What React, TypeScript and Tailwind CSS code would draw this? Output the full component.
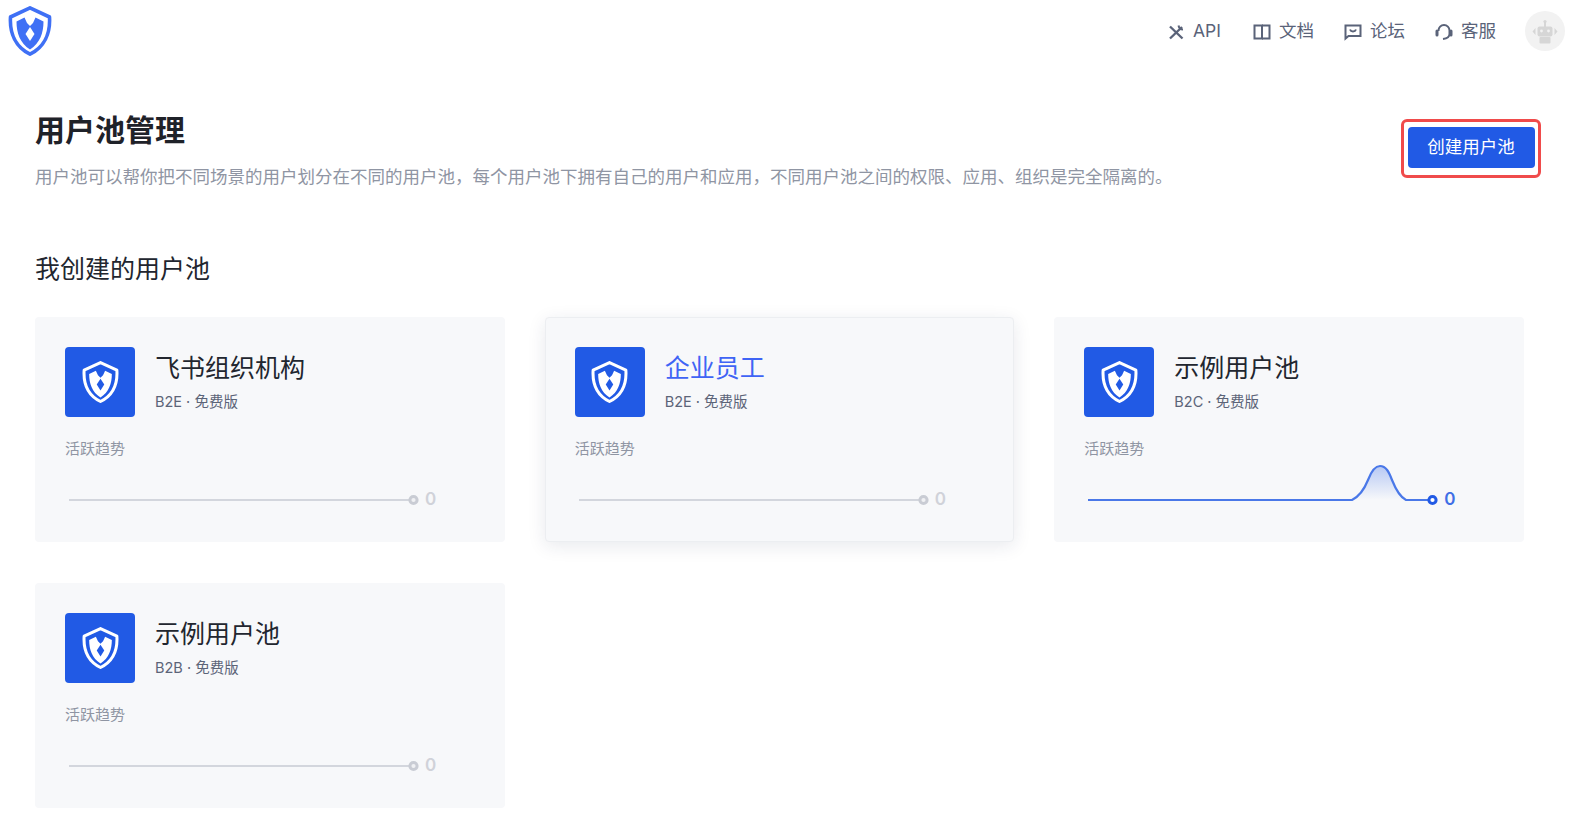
import React from "react";

const FONT = "font-['Inter','Noto_Sans_CJK_SC',sans-serif]";

function Shield({ className, color }: { className?: string; color: string }) {
  return (
    <svg viewBox="0 0 44 50" className={className}>
      <path d="M22 1.8 L41.5 11 C42.5 27 36.5 41 22 48.2 C7.5 41 1.5 27 2.5 11 Z" fill="none" stroke={color} strokeWidth="3.6" strokeLinejoin="round" />
      <path d="M16.5 11.5 L8.5 15.5 C8.5 27 12 37 22 43.5 C32 37 35.5 27 35.5 15.5 L27.5 11.5 L25 17 L22 20 L19 17 Z" fill={color} />
      <path d="M22 21 L26.5 28 L22 35 L17.5 28 Z" fill="var(--shield-bg)" />
    </svg>
  );
}

function Spark({ active }: { active?: boolean }) {
  const line = active ? "#4a78e8" : "#d3d6dd";
  const dot = active ? "#215ae5" : "#c9ccd4";
  return (
    <div className="mt-[8px] flex items-center h-[34px]">
      <svg width="354" height="34" viewBox="0 0 354 34" className="shrink-0 overflow-visible">
        {active && (
          <>
            <defs>
              <linearGradient id="fillArea" x1="0" y1="0" x2="0" y2="1">
                <stop offset="0" stopColor="#215ae5" stopOpacity="0.3" />
                <stop offset="1" stopColor="#215ae5" stopOpacity="0" />
              </linearGradient>
            </defs>
            <path d="M268 32 C276 28 280 22 284 12 C287 4 291 -2 296 -2 C302 -2 305 4 308 12 C312 22 316 29 322 32 Z" fill="url(#fillArea)" />
          </>
        )}
        {active ? (
          <path d="M4 32 L268 32 C276 28 280 22 284 12 C287 4 291 -2 296 -2 C302 -2 305 4 308 12 C312 22 316 29 322 32 L347 32" fill="none" stroke={line} strokeWidth="2.2" />
        ) : (
          <path d="M4 32 L347 32" fill="none" stroke={line} strokeWidth="2.2" />
        )}
        <circle cx="348.5" cy="32" r="3.6" fill={active ? "#ffffff" : "#f0f1f4"} stroke={dot} strokeWidth="3" />
      </svg>
      <span className={`ml-[6px] text-[17px] font-semibold leading-none relative top-[14px] ${active ? "text-[#3f6fe6]" : "text-[#d0d2d9]"}`}>0</span>
    </div>
  );
}

function Card({ title, type, hover, active, linked }: { title: string; type: string; hover?: boolean; active?: boolean; linked?: boolean }) {
  return (
    <div className={hover
      ? "h-[225px] rounded-[4px] bg-[#f7f8fa] border border-[#eceef1] p-[29px] shadow-[0_4px_18px_rgba(30,40,80,0.1)]"
      : "h-[225px] rounded-[4px] bg-[#f7f8fa] p-[30px]"}>
      <div className="flex items-start">
        <div className="w-[70px] h-[70px] rounded-[4px] bg-[#215ae5] flex items-center justify-center [--shield-bg:#215ae5]">
          <Shield className="w-[37px] h-[42px]" color="#ffffff" />
        </div>
        <div className="ml-[20px]">
          <div className={`text-[25px] leading-[36px] mt-[3px] ${linked ? "text-[#3f64f5]" : "text-[#22262f]"}`}>{title}</div>
          <div className="text-[14.5px] leading-[20px] mt-[6px] text-[#5c6478]">{type}</div>
        </div>
      </div>
      <div className="mt-[21px] text-[15px] leading-[22px] text-[#8f95a3]">活跃趋势</div>
      <Spark active={active} />
    </div>
  );
}

function NavItem({ icon, label }: { icon: React.ReactNode; label: string }) {
  return (
    <div className="flex items-center gap-[8px] text-[17.5px] text-[#5a6379]">
      {icon}
      <span>{label}</span>
    </div>
  );
}

const stroke = { fill: "none", stroke: "#5a6379", strokeWidth: 2 };

export default function App() {
  return (
    <div className={`${FONT} min-h-[819px] bg-white overflow-hidden`}>
      <header className="h-[62px] flex items-center justify-between pl-[8px] pr-[15px]">
        <div className="[--shield-bg:#ffffff]">
          <Shield className="w-[44px] h-[50px]" color="#3f70f5" />
        </div>
        <div className="flex items-center">
          <div className="flex items-center gap-[30px] mt-[1px]">
            <div className="mr-[2px]">
              <NavItem label="API" icon={
                <svg width="18" height="18" viewBox="0 0 18 18" {...stroke} strokeWidth={2.4}>
                  <path d="M3 15.5 L15 4" /><path d="M3 3.5 L15.5 15.5" /><path d="M11.5 2.5 C12 5 13.5 6.5 16 6.5" strokeWidth={2} />
                </svg>} />
            </div>
            <NavItem label="文档" icon={
              <svg width="18" height="18" viewBox="0 0 18 18" {...stroke}>
                <path d="M1.5 2.5 H9 V15.5 H1.5 Z" /><path d="M9 2.5 H16.5 V15.5 H9" />
              </svg>} />
            <NavItem label="论坛" icon={
              <svg width="18" height="18" viewBox="0 0 18 18" {...stroke}>
                <path d="M1.5 2.5 H16.5 V13 H4.5 L1.5 15.5 Z" /><path d="M6 6.5 C7 9 11 9 12 6.5" />
              </svg>} />
            <NavItem label="客服" icon={
              <svg width="18" height="18" viewBox="0 0 18 18" {...stroke}>
                <path d="M3.5 8 V7.5 a5.5 5.5 0 0 1 11 0 V11 C14.5 14 12 15.5 8 16" />
                <path d="M2 8 V12" strokeWidth={3} strokeLinecap="round" />
                <path d="M16 8 V12" strokeWidth={3} strokeLinecap="round" />
              </svg>} />
          </div>
          <div className="ml-[29px] mr-[-6px] w-[40px] h-[40px] rounded-full bg-[#f2f2f2] flex items-center justify-center">
            <svg width="40" height="40" viewBox="0 0 40 40" fill="#d6d6d6">
              <rect x="19" y="11" width="2" height="5" /><circle cx="20" cy="10.5" r="1.6" />
              <rect x="12.5" y="15.5" width="15" height="10" rx="2" />
              <path d="M10.5 17 L7.5 20.5 L10.5 24 Z" /><path d="M29.5 17 L32.5 20.5 L29.5 24 Z" />
              <rect x="14.5" y="26" width="11" height="6.5" rx="1" />
              <circle cx="16.5" cy="20" r="1.4" fill="#f2f2f2" /><circle cx="23.5" cy="20" r="1.4" fill="#f2f2f2" />
            </svg>
          </div>
        </div>
      </header>

      <main className="pl-[35px] pr-[50px]">
        <div className="flex items-start justify-between pt-[46px]">
          <div>
            <h1 className="text-[30px] leading-[44px] font-bold text-[#1f2229]">用户池管理</h1>
            <p className="text-[17.5px] leading-[26px] mt-[12px] text-[#8f95a3]">用户池可以帮你把不同场景的用户划分在不同的用户池，每个用户池下拥有自己的用户和应用，不同用户池之间的权限、应用、组织是完全隔离的。</p>
          </div>
          <div className="mt-[11px] -mr-[17px] w-[140px] h-[59px] rounded-[6px] border-[3px] border-[#f04b4b] bg-white flex items-center justify-center">
            <button className="w-[127px] h-[41px] mb-[2px] rounded-[4px] bg-[#215ae5] text-white text-[17.5px]">创建用户池</button>
          </div>
        </div>

        <h2 className="mt-[60px] text-[25px] leading-[38px] text-[#22262f]">我创建的用户池</h2>

        <div className="mt-[29px] grid grid-cols-3 gap-x-[40px] gap-y-[41px]">
          <Card title="飞书组织机构" type="B2E · 免费版" />
          <Card title="企业员工" type="B2E · 免费版" hover linked />
          <Card title="示例用户池" type="B2C · 免费版" active />
          <Card title="示例用户池" type="B2B · 免费版" />
        </div>
      </main>
    </div>
  );
}
